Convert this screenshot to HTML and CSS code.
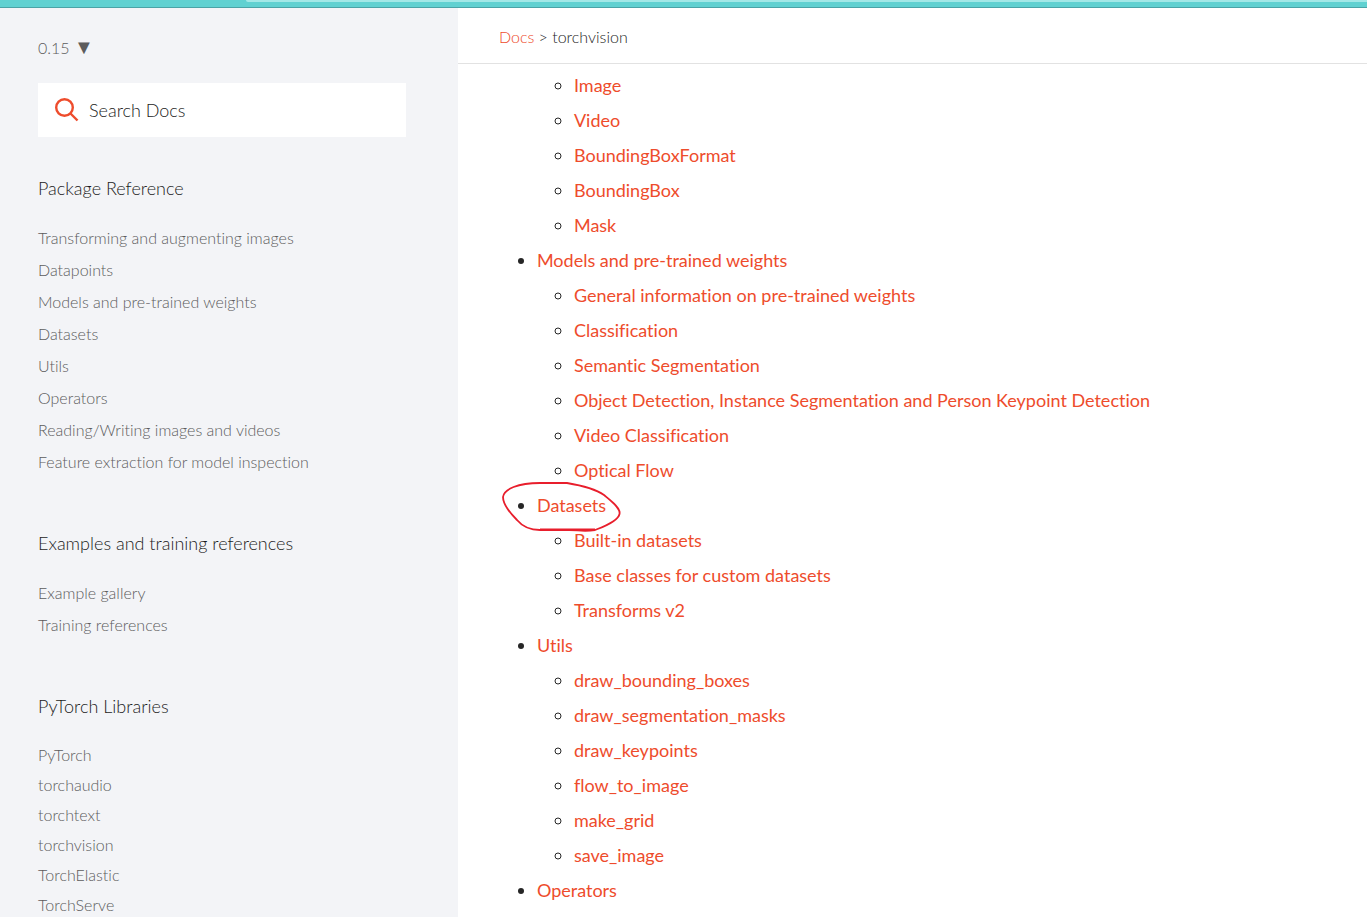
FILE: index.html
```html
<!DOCTYPE html>
<html lang="en">
<head>
<meta charset="utf-8">
<title>torchvision</title>
<link rel="stylesheet" href="styles.css">
</head>
<body>
<div class="browser-edge"><div class="address-edge"></div></div>
<div class="layout">
  <aside class="sidebar">
    <a class="version" href="#">0.15 <span class="version-arrow">▼</span></a>
    <form class="search">
      <svg class="search-icon" viewBox="0 0 24 24" aria-hidden="true"><circle cx="9.5" cy="9.5" r="8.3"/><path d="M15.5 15.5L22.5 22.5"/></svg>
      <input class="search-input" type="text" placeholder="Search Docs" aria-label="Search Docs">
    </form>
    <nav>
      <h2 class="nav-title">Package Reference</h2>
      <ul class="nav-list">
        <li><a href="#">Transforming and augmenting images</a></li>
        <li><a href="#">Datapoints</a></li>
        <li><a href="#">Models and pre-trained weights</a></li>
        <li><a href="#">Datasets</a></li>
        <li><a href="#">Utils</a></li>
        <li><a href="#">Operators</a></li>
        <li><a href="#">Reading/Writing images and videos</a></li>
        <li><a href="#">Feature extraction for model inspection</a></li>
      </ul>
      <h2 class="nav-title">Examples and training references</h2>
      <ul class="nav-list">
        <li><a href="#">Example gallery</a></li>
        <li><a href="#">Training references</a></li>
      </ul>
      <h2 class="nav-title">PyTorch Libraries</h2>
      <ul class="nav-list nav-list-tight">
        <li><a href="#">PyTorch</a></li>
        <li><a href="#">torchaudio</a></li>
        <li><a href="#">torchtext</a></li>
        <li><a href="#">torchvision</a></li>
        <li><a href="#">TorchElastic</a></li>
        <li><a href="#">TorchServe</a></li>
      </ul>
    </nav>
  </aside>
  <main class="content">
    <div class="breadcrumbs"><a href="#">Docs</a> <span class="separator">&gt;</span> torchvision</div>
    <ul class="toc">
      <li class="continued">
        <ul>
          <li><a href="#">Image</a></li>
          <li><a href="#">Video</a></li>
          <li><a href="#">BoundingBoxFormat</a></li>
          <li><a href="#">BoundingBox</a></li>
          <li><a href="#">Mask</a></li>
        </ul>
      </li>
      <li><a href="#">Models and pre-trained weights</a>
        <ul>
          <li><a href="#">General information on pre-trained weights</a></li>
          <li><a href="#">Classification</a></li>
          <li><a href="#">Semantic Segmentation</a></li>
          <li><a href="#">Object Detection, Instance Segmentation and Person Keypoint Detection</a></li>
          <li><a href="#">Video Classification</a></li>
          <li><a href="#">Optical Flow</a></li>
        </ul>
      </li>
      <li class="marked"><a href="#">Datasets</a>
        <svg class="pen-mark" viewBox="0 0 124 54" aria-hidden="true"><path d="M40 3H67C79 5 94 8 104 15C110 20 121 28 119.500 34C118 42 100 48 95 50C84 52 78 50 69 50L40 50C30 50 22 46 17 40C11 34 3 24 3 17C4 9 18 3 40 3"/><path d="M40 49.500H95"/></svg>
        <ul>
          <li><a href="#">Built-in datasets</a></li>
          <li><a href="#">Base classes for custom datasets</a></li>
          <li><a href="#">Transforms v2</a></li>
        </ul>
      </li>
      <li><a href="#">Utils</a>
        <ul>
          <li><a href="#">draw_bounding_boxes</a></li>
          <li><a href="#">draw_segmentation_masks</a></li>
          <li><a href="#">draw_keypoints</a></li>
          <li><a href="#">flow_to_image</a></li>
          <li><a href="#">make_grid</a></li>
          <li><a href="#">save_image</a></li>
        </ul>
      </li>
      <li><a href="#">Operators</a></li>
    </ul>
  </main>
</div>
</body>
</html>
```
FILE: styles.css
```css
* { box-sizing: border-box; }
body {
  margin: 0;
  height: 100vh;
  display: flex;
  flex-direction: column;
  overflow: hidden;
  background: #fff;
  color: #262626;
  font-family: Lato, "Open Sans", sans-serif;
  font-size: 18px;
  font-variant-ligatures: none;
}
a { color: #ee4c2c; text-decoration: none; }
ul { margin: 0; padding: 0; }
.browser-edge {
  flex: none;
  height: 8px;
  background: #60d1d1;
  border-bottom: 1px solid #4aa3a6;
}
.address-edge {
  height: 2px;
  margin-left: 18%;
  background: #a3e8e7;
  border-bottom-left-radius: 4px;
}
.layout { flex: 1; min-height: 0; display: flex; }
.sidebar {
  flex: none;
  width: 33.5%;
  padding: 25px 52px 0 38px;
  background: #f3f4f7;
  color: #1c1c1c;
  font-weight: 300;
}
.version {
  display: block;
  color: #5c5c5d;
  font-size: 16px;
  line-height: 30px;
}
.version-arrow {
  font-family: "DejaVu Sans", sans-serif;
  font-size: 20px;
  line-height: 16px;
}
.search {
  display: flex;
  align-items: center;
  gap: 10px;
  height: 54px;
  margin-top: 20px;
  padding-left: 17px;
  background: #fff;
}
.search-icon {
  flex: none;
  width: 24px;
  height: 24px;
  fill: none;
  stroke: #ee4c2c;
  stroke-width: 2.4;
}
.search-input {
  flex: 1;
  min-width: 0;
  padding: 0;
  border: 0;
  outline: 0;
  background: transparent;
  font: inherit;
}
.search-input::placeholder { color: #1c1c1c; opacity: 1; }
.nav-title {
  margin: 36px 0 19px;
  font-size: 18px;
  font-weight: 300;
  line-height: 30px;
}
.nav-list {
  list-style: none;
  margin-bottom: 50px;
  font-size: 16px;
  line-height: 32px;
}
.nav-list-tight { margin-bottom: 0; line-height: 30px; }
.nav-list a { color: #5c5c5d; }
.content { flex: 1; min-width: 0; }
.breadcrumbs {
  height: 56px;
  padding-left: 41px;
  border-bottom: 1px solid #e2e2e2;
  font-size: 16px;
  font-weight: 300;
  line-height: 58px;
}
.toc { padding: 4px 0 0 79px; line-height: 35px; }
.toc ul { padding-left: 37px; }
.continued { list-style: none; }
.toc ul li { list-style: circle; }
.marked { position: relative; }
.pen-mark {
  position: absolute;
  left: -37px;
  top: -8px;
  width: 124px;
  height: 54px;
  fill: none;
  stroke: #e81e2c;
  stroke-width: 1.8;
  pointer-events: none;
}
```
